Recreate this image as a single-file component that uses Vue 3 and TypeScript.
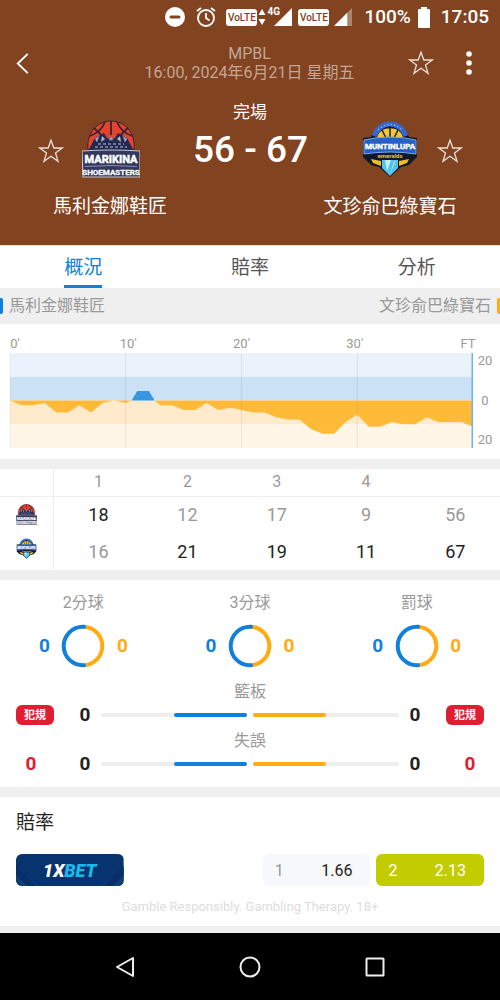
<script setup lang="ts">
import { computed, ref } from 'vue'

interface Point { minute: number; lead: number }

const home = '馬利金娜鞋匠'
const away = '文珍俞巴綠寶石'

const tabs = ['概況', '賠率', '分析']
const activeTab = ref('概況')

const leads = [0, -2, -2, -1, -5, -5, -2, -5, -1, 0, -1, 4, 4, -2, -2, -4, -4, -1, -4, -3, -4,
  -5, -5, -7, -8, -8, -12, -14, -14, -9, -6, -11, -11, -9, -10, -10, -7, -9, -9, -9, -11]

const momentum = computed<Point[]>(() => {
  const points: Point[] = []
  leads.forEach((lead, minute) => {
    const previous = leads[minute - 1] ?? 0
    if (previous * lead < 0) points.push({ minute: minute - 0.5, lead: 0 })
    points.push({ minute, lead })
  })
  return points
})

function area(side: 1 | -1): string {
  const line = momentum.value
    .map(p => `L${p.minute} ${20 - (p.lead * side > 0 ? p.lead : 0)}`)
    .join(' ')
  return `M0 20 ${line} L40 20 Z`
}

const timeLabels = ["0'", "10'", "20'", "30'", 'FT']

const quarters = ['1', '2', '3', '4', '']
const rows = [
  { team: home, logo: '#logo-marikina', scores: [18, 12, 17, 9, 56] },
  { team: away, logo: '#logo-muntinlupa', scores: [16, 21, 19, 11, 67] },
]
const leadsColumn = (row: number, column: number) =>
  rows[row].scores[column] > rows[1 - row].scores[column]

const shots = ['2分球', '3分球', '罰球']
const bars = ['籃板', '失誤']
const odds = [
  { pick: '1', price: '1.66', best: false },
  { pick: '2', price: '2.13', best: true },
]
</script>

<template>
  <div class="page">
    <svg class="defs" aria-hidden="true">
      <symbol id="star" viewBox="0 0 26 26">
        <path d="M13 2.2 15.8 10H24.2L17.5 15 20 23.3 13 18.3 6 23.3 8.5 15 1.8 10H10.2Z" fill="none" stroke="currentColor" stroke-width="1.3" />
      </symbol>
      <symbol id="logo-marikina" viewBox="0 0 58 58">
        <path d="M6 30C4 12 16 1 29 1S54 12 52 30Z" fill="#e2452b" stroke="#3a2233" stroke-width="1" />
        <path d="M29 1V15M8 16Q19 12 23 2M50 16Q39 12 35 2M12 8Q20 15 23 20M46 8Q38 15 35 20" fill="none" stroke="#3b2036" stroke-width="1.8" />
        <path d="M6 31 13 18 22 13 25 18 29 20 33 18 36 13 45 18 52 31Z" fill="#232851" />
        <path d="M13 19 17 16 15 22M20 16 23 19 19 22M45 19 41 16 43 22M38 16 35 19 39 22M27 20 29 16 31 20Z" fill="#b9bccd" stroke="#6c7090" stroke-width="1" />
        <path d="M16 24H42M13 27H45" stroke="#8a8fab" stroke-width="1.5" stroke-dasharray="3 2" />
        <path d="M0 31Q29 29 58 31V57H1Z" fill="#34385f" stroke="#c9c5c8" stroke-width="1.2" />
        <text x="29" y="43" class="logo-text" font-size="11" fill="#fff" stroke="#fff" stroke-width=".5">MARIKINA</text>
        <path d="M3 46.5Q29 44.5 55 46.5" fill="none" stroke="#8d90a8" stroke-width="1" />
        <text x="29" y="55" class="logo-text" font-size="8" fill="#fff" stroke="#fff" stroke-width=".3">SHOEMASTERS</text>
      </symbol>
      <symbol id="logo-muntinlupa" viewBox="0 0 58 58">
        <path d="M10 17C17-2 41-2 48 17L56 18V37L48 45 40 47 29 57 18 47 10 45 2 37V18Z" fill="#10182b" />
        <path d="M13 16C20 0 38 0 45 16" fill="none" stroke="#3568cf" stroke-width="5" />
        <path d="M17 10Q29-1 41 10" fill="none" stroke="#91b5ef" stroke-width="1.3" stroke-dasharray="1.5 2" />
        <path d="M16 18C18 5 40 5 42 18Z" fill="#f4c53b" />
        <path d="M29 8V17M21 10 25 18M37 10 33 18" stroke="#2a2920" stroke-width="1.6" />
        <path d="M3 20Q29 14 55 20V34Q29 30 3 34Z" fill="#2761c6" stroke="#76a5e5" stroke-width="1" />
        <text x="29" y="29" class="logo-text" font-size="8" fill="#fff" stroke="#fff" stroke-width=".4">MUNTINLUPA</text>
        <path d="M10 39 20 41V46L12 43ZM48 39 38 41V46L46 43Z" fill="#f0bb29" />
        <text x="29" y="38" class="logo-text" font-size="6" fill="#f0c52d">emeralds</text>
        <path d="M21 40H37V48L29 56 21 48Z" fill="#54c4eb" />
        <path d="M24 40H30L26 51ZM35 40 29 54 33 42Z" fill="#bdf0fa" />
      </symbol>
    </svg>

    <header class="header">
      <div class="status">
        <svg class="dnd" viewBox="0 0 20 20"><circle cx="10" cy="10" r="10" fill="#fff" /><path d="M6 10H14" stroke="#824321" stroke-width="3" stroke-linecap="round" /></svg>
        <svg class="alarm" viewBox="0 0 20 20" fill="none" stroke="#fff" stroke-width="1.8"><circle cx="10" cy="11" r="8" /><path d="M10 6V11L13.5 13.5M1 4 5 1M19 4 15 1" /></svg>
        <span class="volte">VoLTE</span>
        <svg class="updown" viewBox="0 0 8 18"><path d="M4 1 7.5 7H.5ZM4 17 7.5 11H.5Z" fill="#fff" /></svg>
        <span class="signal-4g"><span class="net">4G</span><svg viewBox="0 0 19 19"><path d="M19 0V19H0Z" fill="#fff" /></svg></span>
        <span class="volte second">VoLTE</span>
        <svg class="signal" viewBox="0 0 19 19"><path d="M19 0V19H0Z" fill="#fff" opacity=".35" /><path d="M14 5V19H0Z" fill="#fff" /></svg>
        <span class="percent">100%</span>
        <svg class="battery" viewBox="0 0 12 21"><path d="M3 0H9V2H11Q12 2 12 3V20Q12 21 11 21H1Q0 21 0 20V3Q0 2 1 2H3Z" fill="#fff" /></svg>
        <span class="clock">17:05</span>
      </div>

      <div class="toolbar">
        <button class="icon-button back" aria-label="返回">
          <svg viewBox="0 0 12 20"><path d="M11 .8 1.5 10 11 19.2" fill="none" stroke="#fff" stroke-width="1.8" /></svg>
        </button>
        <div class="event">
          <div>MPBL</div>
          <div>16:00, 2024年6月21日 星期五</div>
        </div>
        <div class="actions">
          <button class="icon-button star" aria-label="收藏"><svg><use href="#star" /></svg></button>
          <button class="icon-button more" aria-label="更多">
            <svg viewBox="0 0 6 24" fill="#fff"><circle cx="3" cy="3" r="2.8" /><circle cx="3" cy="12" r="2.8" /><circle cx="3" cy="21" r="2.8" /></svg>
          </button>
        </div>
      </div>

      <div class="state">完場</div>
      <div class="match">
        <button class="icon-button star" :aria-label="home"><svg><use href="#star" /></svg></button>
        <svg class="crest"><use href="#logo-marikina" /></svg>
        <div class="score">56 - 67</div>
        <svg class="crest"><use href="#logo-muntinlupa" /></svg>
        <button class="icon-button star" :aria-label="away"><svg><use href="#star" /></svg></button>
      </div>
      <div class="names"><div>{{ home }}</div><div>{{ away }}</div></div>
    </header>

    <nav class="tabs">
      <button v-for="tab in tabs" :key="tab" :class="['tab', { active: tab === activeTab }]" @click="activeTab = tab">
        <span>{{ tab }}</span>
      </button>
    </nav>

    <main>
      <div class="legend">
        <span class="marker home"></span><span>{{ home }}</span>
        <span class="legend-away">{{ away }}</span><span class="marker away"></span>
      </div>

      <section class="chart">
        <div class="chart-main">
          <div class="times"><span v-for="label in timeLabels" :key="label">{{ label }}</span></div>
          <svg class="plot" viewBox="0 0 40 40" preserveAspectRatio="none">
            <path d="M0 0H40V10H0Z" fill="#eaf2fc" />
            <path d="M0 10H40V20H0Z" fill="#cbe1f6" />
            <path d="M0 20H40V30H0Z" fill="#ffebcb" />
            <path d="M0 30H40V40H0Z" fill="#fff6e8" />
            <path :d="area(1)" fill="#3795e2" />
            <path :d="area(-1)" fill="#ffba38" />
            <path class="rule" d="M0 0V40M10 0V40M20 0V40M30 0V40" />
            <path class="rule end" d="M40 0V40" />
          </svg>
        </div>
        <div class="scale"><span>20</span><span>0</span><span>20</span></div>
      </section>

      <section class="panel">
        <table class="quarters">
          <thead>
            <tr><td class="team"></td><th v-for="(q, i) in quarters" :key="i" scope="col">{{ q }}</th></tr>
          </thead>
          <tbody>
            <tr v-for="(row, r) in rows" :key="row.team">
              <th class="team" scope="row" :aria-label="row.team"><svg><use :href="row.logo" /></svg></th>
              <td v-for="(score, c) in row.scores" :key="c" :class="{ lead: leadsColumn(r, c) }">{{ score }}</td>
            </tr>
          </tbody>
        </table>
      </section>

      <section class="panel stats">
        <div class="shots">
          <div v-for="shot in shots" :key="shot" class="shot">
            <div class="label">{{ shot }}</div>
            <div class="ring-row">
              <b class="blue">0</b>
              <svg viewBox="0 0 44 44" fill="none" stroke-width="4">
                <path d="M22 2.7A19.3 19.3 0 0 1 22 41.3" stroke="#ffab12" />
                <path d="M23 2.7H22A19.3 19.3 0 0 0 22 41.3H23" stroke="#1180dc" stroke-linecap="round" />
              </svg>
              <b class="orange">0</b>
            </div>
          </div>
        </div>
        <div class="compare">
          <div class="fouls"><span class="badge">犯規</span><b>0</b></div>
          <div class="bars">
            <template v-for="bar in bars" :key="bar">
              <div class="label">{{ bar }}</div>
              <div class="bar-row">
                <b>0</b>
                <div class="track left"><i></i></div>
                <div class="track right"><i></i></div>
                <b>0</b>
              </div>
            </template>
          </div>
          <div class="fouls"><span class="badge">犯規</span><b>0</b></div>
        </div>
      </section>

      <section class="panel odds">
        <h2>賠率</h2>
        <div class="odds-row">
          <a class="bookmaker" href="#" aria-label="1XBET">
            <svg class="chevrons" viewBox="0 0 107 32" preserveAspectRatio="none">
              <path d="M0 32V0H107V32Z" fill="#07346f" />
              <path d="M0 14 22 32H85L107 14V32H0Z" fill="#113d75" />
              <path d="M0 12 20 32H11L0 21ZM107 12 87 32H96L107 21Z" fill="#082e68" />
            </svg>
            <span class="brand">1X<em>BET</em></span>
          </a>
          <button v-for="odd in odds" :key="odd.pick" :class="['odd', { best: odd.best }]">
            <span class="pick">{{ odd.pick }}</span><span>{{ odd.price }}</span>
          </button>
        </div>
        <p>Gamble Responsibly. Gambling Therapy. 18+</p>
      </section>
    </main>

    <footer class="system">
      <button aria-label="返回"><svg viewBox="0 0 22 22"><path d="M19 2V20L3 11Z" /></svg></button>
      <button aria-label="主頁"><svg viewBox="0 0 22 22"><circle cx="11" cy="11" r="9.5" /></svg></button>
      <button aria-label="概覽"><svg viewBox="0 0 22 22"><rect x="2.5" y="2.5" width="17" height="17" rx=".5" /></svg></button>
    </footer>
  </div>
</template>

<style>
body { margin: 0; background: #efefef; }
</style>

<style scoped>
.page {
  min-height: 100vh;
  display: flex;
  flex-direction: column;
  font-family: Roboto, "Noto Sans CJK TC", sans-serif;
  font-size: 16px;
  line-height: 20px;
  color: #222;
  background: #efefef;
}
button { font: inherit; color: inherit; border: 0; background: none; padding: 0; cursor: pointer; }
svg { display: block; flex: none; }
b { font-size: 19px; font-weight: 700; text-align: center; }
.defs { position: absolute; width: 0; height: 0; }
.logo-text { font-family: Roboto, sans-serif; font-weight: 700; text-anchor: middle; }

.header { background: #824321; color: #fff; padding-bottom: 26px; border-bottom: 1px solid #ecdfd9; }
.status { display: flex; align-items: center; justify-content: flex-end; height: 34px; padding-right: 11px; font-size: 19px; font-weight: 500; }
.dnd { width: 20px; height: 20px; margin-right: 11px; }
.alarm { width: 20px; height: 20px; margin-right: 10px; }
.volte {
  width: 31px; height: 17px; border-radius: 3px; background: #fff; color: #824321;
  font-size: 10px; line-height: 17px; text-align: center;
}
.updown { width: 8px; height: 18px; margin-left: 1px; }
.signal-4g { position: relative; margin-left: 8px; }
.signal-4g svg { width: 18px; height: 18px; }
.net { position: absolute; top: -2px; left: -7px; font-size: 10px; line-height: 12px; font-weight: 700; }
.second { margin-left: 6px; }
.signal { width: 18px; height: 18px; margin-left: 5px; }
.percent { margin-left: 12px; }
.battery { width: 12px; height: 21px; margin: 0 11px 0 7px; }

.toolbar { display: grid; grid-template-columns: 1fr auto 1fr; align-items: center; height: 40px; margin-top: 9px; padding: 0 17px 0 16px; }
.icon-button { display: block; flex: none; }
.back svg { width: 13px; height: 21px; }
.event { text-align: center; color: #c4a694; line-height: 19px; }
.actions { display: flex; justify-content: flex-end; align-items: center; gap: 21px; }
.star svg { width: 26px; height: 26px; color: #eadfd9; }
.more svg { width: 28px; height: 24px; }
.state { margin-top: 18px; text-align: center; font-size: 17px; line-height: 22px; }
.match { display: flex; align-items: center; gap: 18px; height: 58px; margin-top: -3px; padding: 0 37px 0 38px; }
.match .star { margin-top: 4px; }
.crest { width: 58px; height: 58px; }
.score { flex: 1; padding-top: 2px; text-align: center; font-size: 37px; line-height: 44px; font-weight: 500; white-space: nowrap; }
.names { display: grid; grid-template-columns: 1fr 1fr; gap: 60px; margin-top: 17px; text-align: center; font-size: 19px; line-height: 24px; }

.tabs { display: grid; grid-template-columns: repeat(3, 1fr); height: 42px; background: #fff; }
.tab { display: flex; justify-content: center; font-size: 19px; color: #555; }
.tab span { box-sizing: border-box; height: 42px; line-height: 43px; border-bottom: 3px solid transparent; }
.active { color: #1180dc; }
.active span { border-color: #1180dc; }

.legend { display: flex; align-items: center; gap: 6px; height: 36px; color: #999; }
.legend-away { margin-left: auto; }
.marker { width: 3px; height: 16px; }
.marker.home { background: #1180dc; border-radius: 0 2px 2px 0; }
.marker.away { background: #ffab12; border-radius: 2px 0 0 2px; }

.chart { display: flex; align-items: flex-end; padding: 12px 3px 11px 10px; background: #fff; font-size: 13px; line-height: 16px; color: #999; }
.chart-main { flex: 1; }
.times { display: flex; justify-content: space-between; margin: 0 -4px 1px; }
.times span { width: 18px; text-align: center; }
.plot { width: 100%; height: 95px; }
.rule { stroke: rgba(90, 90, 90, .12); stroke-width: 1; fill: none; vector-effect: non-scaling-stroke; }
.end { stroke: #6db3ea; stroke-width: 3; }
.scale { width: 24px; height: 95px; display: flex; flex-direction: column; justify-content: space-between; text-align: center; }

.panel { margin-top: 10px; background: #fff; }
.quarters { width: 100%; table-layout: fixed; border-collapse: collapse; text-align: center; }
.quarters th, .quarters td { padding: 0; font-weight: 400; color: #999; }
.quarters thead tr { height: 27px; border-bottom: 1px solid #eee; }
.quarters tbody tr { height: 37px; font-size: 18px; }
.quarters .team { width: 53px; border-right: 1px solid #eee; }
.team svg { width: 21px; height: 21px; margin: 0 auto; }
tr:last-child .team svg { margin-bottom: 6px; }
.quarters .lead { color: #222; }

.stats { padding: 13px 0; }
.label { text-align: center; color: #999; }
.shots { display: grid; grid-template-columns: repeat(3, 1fr); }
.ring-row { display: flex; justify-content: center; align-items: center; gap: 12px; margin-top: 11px; }
.ring-row svg { width: 44px; height: 44px; }
.ring-row b, .bar-row b { display: flex; justify-content: center; width: 10px; }
.blue { color: #1180dc; }
.orange { color: #ffab12; }
.compare { display: flex; padding: 14px 16px 0; }
.fouls { width: 38px; display: flex; flex-direction: column; gap: 29px; padding-top: 23px; color: #e01e31; }
.fouls b { width: 30px; }
.fouls:last-child b { width: 28px; align-self: flex-end; }
.badge { height: 20px; border-radius: 6px; background: #e01e31; color: #fff; text-align: center; font-size: 11px; line-height: 21px; font-weight: 700; }
.bars { flex: 1; padding: 0 26px; }
.bar-row { display: flex; align-items: center; gap: 6px; margin: 3px 0 6px; }
.bar-row:last-child { margin-bottom: 0; }
.bar-row b:first-child { margin-right: 5px; }
.bar-row b:last-child { margin-left: 5px; }
.track { flex: 1; display: flex; height: 4px; border-radius: 2px; background: #eee; }
.track i { width: 50%; border-radius: 2px; background: #ffab12; }
.left { justify-content: flex-end; }
.left i { background: #1180dc; }

.odds { padding: 14px 16px 9px; }
h2 { margin: 0; font-size: 19px; line-height: 24px; font-weight: 400; }
.odds-row { display: flex; gap: 6px; margin-top: 19px; }
.bookmaker, .odd { box-sizing: border-box; width: 23%; height: 32px; border-radius: 6px; overflow: hidden; }
.bookmaker { display: grid; margin-right: auto; text-decoration: none; }
.bookmaker > * { grid-area: 1 / 1; }
.chevrons { width: 100%; height: 32px; }
.brand { z-index: 1; text-align: center; font-size: 18px; line-height: 33px; font-style: italic; font-weight: 900; color: #fff; }
.brand em { color: #1bb7ed; }
.odd { display: flex; align-items: center; justify-content: space-between; padding: 2px 18px 0 12px; background: #f7f8fb; }
.pick { color: #999; }
.best { background: #c2cc00; color: #fff; }
.best .pick { color: #fff; }
.odds p { margin: 11px 0 0; text-align: center; font-size: 13px; color: #ddd; }

.system { margin-top: auto; display: flex; height: 67px; padding: 0 12.5%; background: #000; }
.system button { flex: 1; display: flex; justify-content: center; align-items: center; }
.system svg { width: 22px; height: 22px; fill: none; stroke: #eee; stroke-width: 2; stroke-linejoin: round; }
</style>
